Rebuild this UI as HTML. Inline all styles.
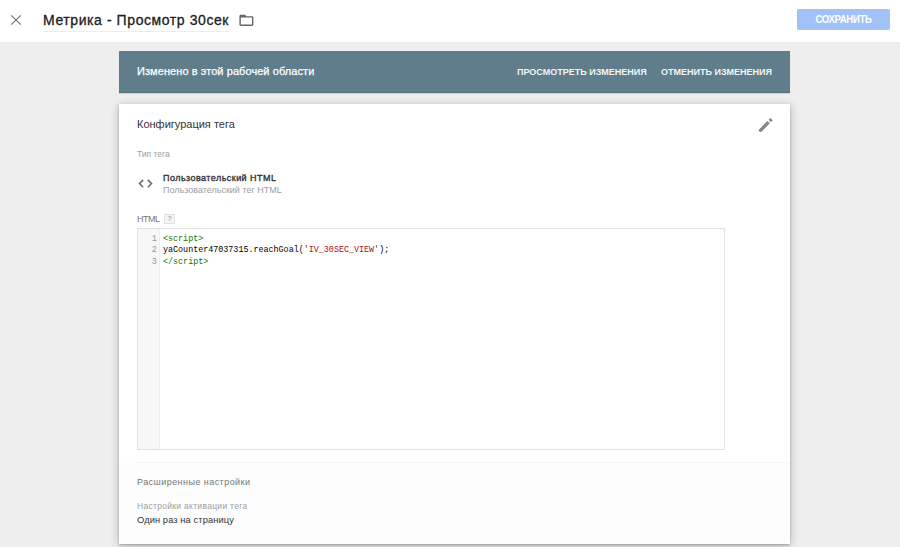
<!DOCTYPE html>
<html><head><meta charset="utf-8">
<style>
html,body{margin:0;padding:0;width:900px;height:547px;overflow:hidden;background:#eeeeee;font-family:"Liberation Sans",sans-serif;}
.abs{position:absolute;white-space:nowrap;}
#header{position:absolute;left:0;top:0;width:900px;height:42px;background:#fff;}
#title{left:43px;top:11px;font-size:14px;color:#212121;line-height:18px;letter-spacing:0.58px;-webkit-text-stroke:0.3px #212121;}
#uline{position:absolute;left:44px;top:31px;width:184px;height:1px;background:#ececec;}
#save{position:absolute;left:797px;top:9px;width:93px;height:21px;padding-top:0;box-sizing:border-box;background:#a1c2f8;border-radius:2px;color:#fff;font-weight:bold;font-size:9.6px;letter-spacing:-0.35px;line-height:19px;text-align:center;}
#save span{display:inline-block;transform:translateY(0.6px) scaleY(1.1);transform-origin:50% 30%;}
#banner{position:absolute;left:119px;top:51px;width:671px;height:41.5px;background:#607d8b;box-shadow:inset 0 -1px 0 rgba(0,0,0,0.08),0 1px 1px rgba(0,0,0,0.1);}
#bannertext{left:137px;top:64px;font-size:11px;color:#fff;line-height:14px;letter-spacing:0.07px;-webkit-text-stroke:0.25px #fff;}
#view{left:517px;top:64.6px;font-size:9px;font-weight:bold;color:#f3f5f6;line-height:12px;transform:scaleY(1.08);transform-origin:0 0;}
#undo{left:661px;top:64.6px;font-size:9px;font-weight:bold;color:#f3f5f6;line-height:12px;transform:scaleY(1.08);transform-origin:0 0;}
#card{position:absolute;left:119px;top:104px;width:671px;height:440px;background:#fff;box-shadow:0 1px 2px rgba(0,0,0,0.22),0 2px 9px rgba(0,0,0,0.24);}
#cfg{left:137px;top:117px;font-size:11px;color:#333;line-height:14px;}
#tiptag{left:137px;top:149px;font-size:8.5px;color:#9e9e9e;line-height:10px;letter-spacing:0px;}
#ctitle{left:163px;top:171.7px;font-size:9px;color:#333;line-height:12px;-webkit-text-stroke:0.35px #333;letter-spacing:0.45px;}
#csub{left:163px;top:183.6px;font-size:9px;color:#9e9e9e;line-height:12px;}
#htmllbl{left:137px;top:213.5px;font-size:9px;color:#757575;line-height:11px;letter-spacing:-0.5px;}
#qbox{position:absolute;left:164px;top:214px;width:9px;height:8px;border:1px solid #e0e0e0;background:#f5f5f5;font-size:7.5px;color:#888;line-height:8px;text-align:center;}
#editor{position:absolute;left:137px;top:228px;width:586px;height:220px;border:1px solid #e2e2e2;background:#fff;}
#gutter{position:absolute;left:0;top:0;width:21px;height:220px;background:#f7f7f7;border-right:1px solid #eeeeee;}
.ln{position:absolute;left:0;width:19px;text-align:right;font-family:"Liberation Mono",monospace;font-size:8.6px;color:#999;line-height:12px;}
.code{position:absolute;left:25px;font-family:"Liberation Mono",monospace;font-size:8.4px;color:#000;line-height:12px;white-space:pre;}
.tag{color:#117700;}
.str{color:#aa1111;}
#sep{position:absolute;left:136px;top:462px;width:654px;height:1px;background:#f6f6f6;}
#adv{left:137px;top:476.7px;font-size:9px;color:#757575;line-height:11px;letter-spacing:0.45px;}
#acttitle{left:137px;top:501px;font-size:8.5px;color:#9e9e9e;line-height:10px;letter-spacing:0.3px;}
#actval{left:137px;top:514.5px;font-size:9.3px;color:#333;line-height:11px;letter-spacing:0.1px;}
</style></head><body>
<div id="header"></div>
<svg class="abs" style="left:10px;top:13.5px" width="12" height="12" viewBox="0 0 12 12"><path d="M1.2 1.4L10.8 10.6M10.8 1.4L1.2 10.6" stroke="#7a7a7a" stroke-width="1.3"/></svg>
<div id="title" class="abs">Метрика - Просмотр 30сек</div>
<div id="uline"></div>
<svg class="abs" style="left:238px;top:12.4px" width="16.8" height="16.8" viewBox="0 0 24 24"><path d="M20 6h-8l-2-2H4c-1.1 0-1.99.9-1.99 2L2 18c0 1.1.9 2 2 2h16c1.1 0 2-.9 2-2V8c0-1.1-.9-2-2-2zm0 12H4V8h16v10z" fill="#666666"/></svg>
<div id="save"><span>СОХРАНИТЬ</span></div>
<div id="banner"></div>
<div id="bannertext" class="abs">Изменено в этой рабочей области</div>
<div id="view" class="abs">ПРОСМОТРЕТЬ ИЗМЕНЕНИЯ</div>
<div id="undo" class="abs">ОТМЕНИТЬ ИЗМЕНЕНИЯ</div>
<div id="card"></div>
<div id="cfg" class="abs">Конфигурация тега</div>
<svg class="abs" style="left:752px;top:112px" width="28" height="26" viewBox="752 112 28 26"><path d="M760.5 130.3L768.6 122.2" stroke="#858585" stroke-width="3.3"/><circle cx="760.5" cy="130.3" r="1.65" fill="#858585"/><path d="M769.7 121.0L771.6 119.1" stroke="#858585" stroke-width="3.2"/></svg>
<div id="tiptag" class="abs">Тип тега</div>
<svg class="abs" style="left:137px;top:178px" width="17" height="12" viewBox="0 0 17 12"><path d="M6.2 1.9L2.5 5.6L6.2 9.3M10.8 1.9L14.5 5.6L10.8 9.3" fill="none" stroke="#707070" stroke-width="1.6"/></svg>
<div id="ctitle" class="abs">Пользовательский HTML</div>
<div id="csub" class="abs">Пользовательский тег HTML</div>
<div id="htmllbl" class="abs">HTML</div>
<div id="qbox">?</div>
<div id="editor">
  <div id="gutter"></div>
  <div class="ln" style="top:3.6px">1</div>
  <div class="ln" style="top:15.4px">2</div>
  <div class="ln" style="top:27.2px">3</div>
  <div class="code" style="top:3.6px"><span class="tag">&lt;script&gt;</span></div>
  <div class="code" style="top:15.4px">yaCounter47037315.reachGoal(<span class="str">'IV_30SEC_VIEW'</span>);</div>
  <div class="code" style="top:27.2px"><span class="tag">&lt;/script&gt;</span></div>
</div>
<div style="position:absolute;left:119px;top:463px;width:671px;height:81px;background:#fdfdfd;"></div>
<div id="sep"></div>
<div id="adv" class="abs">Расширенные настройки</div>
<div id="acttitle" class="abs">Настройки активации тега</div>
<div id="actval" class="abs">Один раз на страницу</div>
</body></html>
